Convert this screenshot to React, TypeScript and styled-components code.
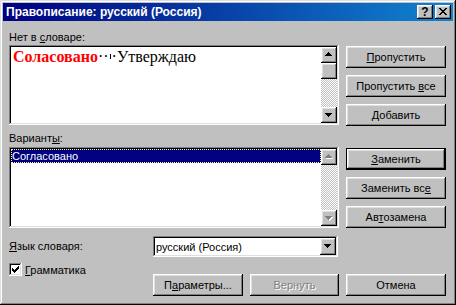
import React from "react";
import styled, { createGlobalStyle, css } from "styled-components";

const GlobalStyle = createGlobalStyle`
  html, body { margin: 0; padding: 0; background: #c0c0c0; }
  body { font-family: "Liberation Sans", Arial, sans-serif; font-size: 11px; color: #000; }
  * { box-sizing: border-box; }
`;

const raised = css`
  box-shadow: inset -1px -1px #000, inset 1px 1px #fff, inset -2px -2px #808080, inset 2px 2px #dfdfdf;
`;
const sunken = css`
  box-shadow: inset -1px -1px #fff, inset 1px 1px #808080, inset -2px -2px #dfdfdf, inset 2px 2px #000;
`;
const checker = css`
  background-color: #fff;
  background-image: conic-gradient(#c0c0c0 25%, #fff 0 50%, #c0c0c0 0 75%, #fff 0);
  background-size: 2px 2px;
`;

const Window = styled.div`
  width: 456px;
  height: 305px;
  padding: 3px;
  background: #c0c0c0;
  box-shadow: inset -1px -1px #000, inset 1px 1px #dfdfdf, inset -2px -2px #808080, inset 2px 2px #fff;
  display: flex;
  flex-direction: column;
`;

const TitleBar = styled.div`
  height: 18px;
  flex: none;
  display: flex;
  align-items: center;
  padding: 0 2px 0 3px;
  background: linear-gradient(to right, #000080, #1084d0);
  color: #fff;
  font-weight: bold;
  font-size: 12px;
  line-height: 18px;
`;

const TitleText = styled.div`
  flex: 1;
  white-space: nowrap;
`;

const CaptionButton = styled.div`
  width: 16px;
  height: 14px;
  margin-left: 2px;
  background: #c0c0c0;
  ${raised};
  display: flex;
  align-items: center;
  justify-content: center;
  color: #000;
  font-size: 12px;
  font-weight: bold;
  line-height: 14px;
  padding-bottom: 1px;
`;

const Client = styled.div`
  flex: 1;
  display: flex;
  flex-direction: column;
  padding: 10px 7px 0 6px;
`;

const Section = styled.div<{ $mt: number }>`
  display: flex;
  gap: 7px;
  margin-top: ${(p) => p.$mt}px;
`;

const LeftCol = styled.div`
  width: 330px;
  display: flex;
  flex-direction: column;
`;

const RightCol = styled.div<{ $pt: number }>`
  width: 100px;
  display: flex;
  flex-direction: column;
  gap: 7px;
  padding-top: ${(p) => p.$pt}px;
`;

const Label = styled.div<{ $mb?: number }>`
  height: 13px;
  line-height: 13px;
  white-space: nowrap;
  margin-bottom: ${(p) => p.$mb ?? 0}px;
`;

const Mn = styled.span`
  text-decoration: underline;
  text-underline-offset: 1px;
`;

const Field = styled.div<{ $h: number }>`
  height: ${(p) => p.$h}px;
  background: #fff;
  padding: 2px;
  display: flex;
  ${sunken};
`;

const TextArea = styled.div`
  flex: 1;
  padding: 1px 2px;
  font-family: "Liberation Serif", "Times New Roman", serif;
  font-size: 16px;
  line-height: 18px;
  white-space: nowrap;
  overflow: hidden;
`;

const Misspelled = styled.span`
  color: #ff0000;
  font-weight: bold;
`;

const Caret = styled.span`
  display: inline-block;
  width: 1px;
  height: 5px;
  background: #000;
  margin: 0 1px;
  vertical-align: 3px;
`;

const ListArea = styled.div`
  flex: 1;
  overflow: hidden;
`;

const ListItem = styled.div<{ $selected?: boolean }>`
  height: 14px;
  line-height: 14px;
  padding-left: 1px;
  white-space: nowrap;
  color: ${(p) => (p.$selected ? "#fff" : "#000")};
  background: ${(p) => (p.$selected ? "#000080" : "transparent")};
  outline: ${(p) => (p.$selected ? "1px dotted #ffff80" : "none")};
  outline-offset: -1px;
`;

const ScrollBar = styled.div`
  width: 16px;
  display: flex;
  flex-direction: column;
`;

const ScrollButton = styled.div`
  width: 16px;
  height: 16px;
  flex: none;
  background: #c0c0c0;
  ${raised};
  display: flex;
  align-items: center;
  justify-content: center;
`;

const Track = styled.div`
  flex: 1;
  ${checker};
`;

const Thumb = styled.div`
  width: 16px;
  height: 16px;
  background: #c0c0c0;
  ${raised};
`;

const Button = styled.div<{ $w?: number; $default?: boolean; $disabled?: boolean }>`
  width: ${(p) => p.$w ?? 100}px;
  height: 22px;
  flex: none;
  background: #c0c0c0;
  display: flex;
  align-items: center;
  justify-content: center;
  white-space: nowrap;
  padding-bottom: 1px;
  ${(p) =>
    p.$default
      ? css`
          box-shadow: inset 0 0 0 1px #000, inset -2px -2px #000, inset 2px 2px #fff,
            inset -3px -3px #808080, inset 3px 3px #dfdfdf;
        `
      : raised};
  color: ${(p) => (p.$disabled ? "#808080" : "#000")};
  text-shadow: ${(p) => (p.$disabled ? "1px 1px #fff" : "none")};
`;

const LangRow = styled.div`
  display: flex;
  align-items: center;
  margin-top: 8px;
`;

const LeftCell = styled.div`
  width: 144px;
  flex: none;
`;

const Combo = styled.div`
  width: 185px;
  height: 21px;
  background: #fff;
  padding: 2px;
  display: flex;
  align-items: center;
  ${sunken};
`;

const ComboText = styled.div`
  flex: 1;
  padding-left: 1px;
  white-space: nowrap;
`;

const ComboButton = styled.div`
  width: 16px;
  height: 17px;
  background: #c0c0c0;
  ${raised};
  display: flex;
  align-items: center;
  justify-content: center;
`;

const BottomRow = styled.div`
  display: flex;
  align-items: flex-start;
`;

const CheckWrap = styled.div`
  display: flex;
  align-items: center;
  gap: 3px;
  margin-top: 6px;
`;

const CheckBox = styled.div`
  width: 13px;
  height: 13px;
  background: #fff;
  ${sunken};
  display: flex;
  align-items: center;
  justify-content: center;
`;

const ButtonRow = styled.div`
  display: flex;
  gap: 7px;
  margin-top: 17px;
`;

const Arrow = ({ dir, disabled }: { dir: "up" | "down"; disabled?: boolean }) => {
  const rows = dir === "up" ? [[3, 1], [2, 3], [1, 5], [0, 7]] : [[0, 7], [1, 5], [2, 3], [3, 1]];
  const d = rows.map(([x, w], y) => `M${x} ${y}h${w}v1h-${w}z`).join("");
  return (
    <svg width="8" height="5" viewBox="0 0 8 5" shapeRendering="crispEdges" style={{ marginTop: dir === "up" ? -1 : 0 }}>
      {disabled && <path d={d} fill="#fff" transform="translate(1 1)" />}
      <path d={d} fill={disabled ? "#808080" : "#000"} />
    </svg>
  );
};

const CloseGlyph = () => (
  <svg width="8" height="7" viewBox="0 0 8 7" shapeRendering="crispEdges">
    <path
      d="M0 0h2v1h-2zM6 0h2v1h-2zM1 1h2v1h-2zM5 1h2v1h-2zM2 2h4v1h-4zM3 3h2v1h-2zM2 4h4v1h-4zM1 5h2v1h-2zM5 5h2v1h-2zM0 6h2v1h-2zM6 6h2v1h-2z"
      fill="#000"
    />
  </svg>
);

const CheckGlyph = () => (
  <svg width="7" height="7" viewBox="0 0 7 7" shapeRendering="crispEdges">
    <path
      d="M6 0h1v1h-1zM5 1h2v1h-2zM0 2h1v1h-1zM4 2h3v1h-3zM0 3h2v1h-2zM3 3h3v1h-3zM0 4h5v1h-5zM1 5h3v1h-3zM2 6h1v1h-1z"
      fill="#000"
    />
  </svg>
);

export default function App() {
  return (
    <>
      <GlobalStyle />
      <Window>
        <TitleBar>
          <TitleText>Правописание: русский (Россия)</TitleText>
          <CaptionButton>?</CaptionButton>
          <CaptionButton>
            <CloseGlyph />
          </CaptionButton>
        </TitleBar>
        <Client>
          <Section $mt={0}>
            <LeftCol>
              <Label $mb={1}>
                Нет в <Mn>с</Mn>ловаре:
              </Label>
              <Field $h={80}>
                <TextArea>
                  <Misspelled>Соласовано</Misspelled>··
                  <Caret />
                  ·Утверждаю
                </TextArea>
                <ScrollBar>
                  <ScrollButton>
                    <Arrow dir="up" />
                  </ScrollButton>
                  <Thumb />
                  <Track />
                  <ScrollButton>
                    <Arrow dir="down" />
                  </ScrollButton>
                </ScrollBar>
              </Field>
            </LeftCol>
            <RightCol $pt={15}>
              <Button>
                <span>
                  <Mn>П</Mn>ропустить
                </span>
              </Button>
              <Button>
                <span>
                  Пропустить <Mn>в</Mn>се
                </span>
              </Button>
              <Button>
                <span>
                  <Mn>Д</Mn>обавить
                </span>
              </Button>
            </RightCol>
          </Section>
          <Section $mt={6}>
            <LeftCol>
              <Label $mb={2}>
                Вариант<Mn>ы</Mn>:
              </Label>
              <Field $h={81}>
                <ListArea>
                  <ListItem $selected>Согласовано</ListItem>
                </ListArea>
                <ScrollBar>
                  <ScrollButton>
                    <Arrow dir="up" disabled />
                  </ScrollButton>
                  <Track />
                  <ScrollButton>
                    <Arrow dir="down" disabled />
                  </ScrollButton>
                </ScrollBar>
              </Field>
            </LeftCol>
            <RightCol $pt={16}>
              <Button $default>
                <span>
                  <Mn>З</Mn>аменить
                </span>
              </Button>
              <Button>
                <span>
                  Заменить вс<Mn>е</Mn>
                </span>
              </Button>
              <Button>
                <span>
                  Ав<Mn>т</Mn>озамена
                </span>
              </Button>
            </RightCol>
          </Section>
          <LangRow>
            <LeftCell>
              <Label>
                <Mn>Я</Mn>зык словаря:
              </Label>
            </LeftCell>
            <Combo>
              <ComboText>русский (Россия)</ComboText>
              <ComboButton>
                <Arrow dir="down" />
              </ComboButton>
            </Combo>
          </LangRow>
          <BottomRow>
            <LeftCell>
              <CheckWrap>
                <CheckBox>
                  <CheckGlyph />
                </CheckBox>
                <span>
                  <Mn>Г</Mn>рамматика
                </span>
              </CheckWrap>
            </LeftCell>
            <ButtonRow>
              <Button $w={90}>
                <span>
                  П<Mn>а</Mn>раметры...
                </span>
              </Button>
              <Button $w={89} $disabled>
                Вернуть
              </Button>
              <Button>Отмена</Button>
            </ButtonRow>
          </BottomRow>
        </Client>
      </Window>
    </>
  );
}
